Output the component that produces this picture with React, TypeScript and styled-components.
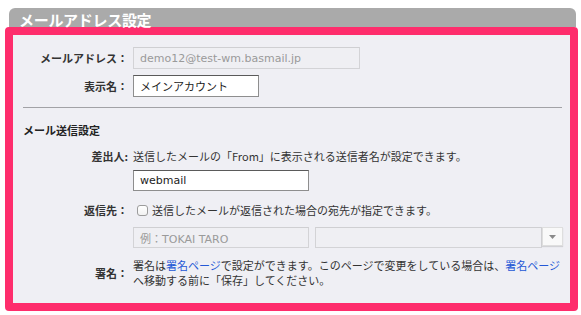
import React from "react";
import styled, { createGlobalStyle } from "styled-components";

const Global = createGlobalStyle`
  html, body { margin: 0; padding: 0; background: #ffffff; }
  body {
    font-family: "Noto Sans", "Noto Sans CJK JP", sans-serif;
    color: #333333;
  }
`;

const Page = styled.div`
  width: 581px;
  height: 315px;
  padding: 8px 3px 0 5px;
  box-sizing: border-box;
`;

const Tab = styled.div`
  margin: 0 2px 0 4px;
  height: 19px;
  background: #aaaaaa;
  border-radius: 6px 6px 0 0;
  display: flex;
  align-items: flex-end;
  padding-left: 10px;
`;

const TabTitle = styled.h2`
  margin: 0;
  font-family: "Noto Sans CJK JP", sans-serif;
  font-size: 15px;
  font-weight: 700;
  line-height: 18px;
  color: #ffffff;
  letter-spacing: -0.3px;
  transform: translateY(2px);
`;

const Panel = styled.div`
  border: 8px solid #fe2d6c;
  border-radius: 4px;
  background: #efeff4;
  height: 284px;
  box-sizing: border-box;
  padding: 12px 8px 0 10px;
  font-size: 11px;
  display: flex;
  flex-direction: column;
`;

const Row = styled.div<{ $mt?: number }>`
  display: grid;
  grid-template-columns: 105px 1fr;
  column-gap: 5px;
  align-items: center;
  margin-top: ${(p) => p.$mt ?? 0}px;
`;

const Label = styled.div`
  text-align: right;
  font-family: "Noto Sans CJK JP", sans-serif;
  font-weight: 700;
  font-size: 11px;
  color: #333333;
  white-space: nowrap;
  line-height: 14px;
`;

const Text = styled.div`
  font-family: "Noto Sans CJK JP", sans-serif;
  font-size: 11px;
  line-height: 14px;
  color: #333333;
  white-space: nowrap;
`;

const Input = styled.div<{ $w: number; $disabled?: boolean; $h?: number }>`
  width: ${(p) => p.$w}px;
  height: ${(p) => p.$h ?? 22}px;
  box-sizing: border-box;
  border: 1px solid ${(p) => (p.$disabled ? "#d3d3d6" : "#8e8e8e")};
  border-top-color: ${(p) => (p.$disabled ? "#cfcfd2" : "#5a5a5a")};
  background: ${(p) => (p.$disabled ? "#efeff3" : "#ffffff")};
  color: ${(p) => (p.$disabled ? "#9a9a9a" : "#222222")};
  font-family: "DejaVu Sans", "Noto Sans CJK JP", sans-serif;
  font-size: 11px;
  padding: 0 6px;
  display: flex;
  align-items: center;
  white-space: nowrap;
  overflow: hidden;
`;

const JpValue = styled.span`
  font-family: "Noto Sans CJK JP", sans-serif;
  font-size: 11px;
`;

const Divider = styled.hr`
  margin: 10px 0 0 0;
  border: 0;
  border-top: 1px solid #a2a2a6;
  height: 0;
`;

const SectionTitle = styled.h3`
  margin: 15px 0 0 0;
  font-family: "Noto Sans CJK JP", sans-serif;
  font-size: 11px;
  font-weight: 700;
  line-height: 14px;
  color: #222222;
`;

const Inline = styled.div<{ $gap?: number }>`
  display: flex;
  align-items: center;
  gap: ${(p) => p.$gap ?? 0}px;
`;

const Check = styled.span`
  display: inline-block;
  width: 11px;
  height: 11px;
  box-sizing: border-box;
  border: 1px solid #9c9c9c;
  border-radius: 3px;
  background: linear-gradient(#ffffff, #f2f2f2);
  margin: 0 4px 0 4px;
`;

const SelectWrap = styled.div`
  display: flex;
  align-items: flex-start;
`;

const SelectButton = styled.div`
  width: 21px;
  height: 19px;
  box-sizing: border-box;
  background: #f9f9f9;
  border: 1px solid #dedede;
  box-shadow: 0 1px 1px rgba(0, 0, 0, 0.12);
  display: flex;
  align-items: center;
  justify-content: center;
`;

const Link = styled.a`
  color: #2458d6;
  text-decoration: none;
`;

const SigText = styled.div`
  font-family: "Noto Sans CJK JP", sans-serif;
  font-size: 11px;
  line-height: 14.5px;
  color: #333333;
`;

export default function App() {
  return (
    <>
      <Global />
      <Page>
        <Tab>
          <TabTitle>メールアドレス設定</TabTitle>
        </Tab>
        <Panel>
          <Row>
            <Label>メールアドレス：</Label>
            <Input $w={227} $disabled>
              demo12@test-wm.basmail.jp
            </Input>
          </Row>
          <Row $mt={6}>
            <Label>表示名：</Label>
            <Input $w={126}>
              <JpValue>メインアカウント</JpValue>
            </Input>
          </Row>
          <Divider />
          <SectionTitle>メール送信設定</SectionTitle>
          <Row $mt={12}>
            <Label>差出人:</Label>
            <Text>送信したメールの「From」に表示される送信者名が設定できます。</Text>
          </Row>
          <Row $mt={7}>
            <div />
            <Input $w={176} $h={21}>
              webmail
            </Input>
          </Row>
          <Row $mt={12}>
            <Label>返信先：</Label>
            <Inline>
              <Check />
              <Text>送信したメールが返信された場合の宛先が指定できます。</Text>
            </Inline>
          </Row>
          <Row $mt={10}>
            <div />
            <Inline $gap={6}>
              <Input $w={176} $h={21} $disabled>
                例：TOKAI TARO
              </Input>
              <SelectWrap>
                <Input $w={227} $h={21} $disabled />
                <SelectButton>
                  <svg width="7" height="4" viewBox="0 0 7 4">
                    <path d="M0 0 L7 0 L3.5 4 Z" fill="#8a8a8a" />
                  </svg>
                </SelectButton>
              </SelectWrap>
            </Inline>
          </Row>
          <Row $mt={10}>
            <Label>署名：</Label>
            <SigText>
              署名は<Link href="#">署名ページ</Link>で設定ができます。このページで変更をしている場合は、<Link href="#">署名ページ</Link>
              <br />
              へ移動する前に「保存」してください。
            </SigText>
          </Row>
        </Panel>
      </Page>
    </>
  );
}
